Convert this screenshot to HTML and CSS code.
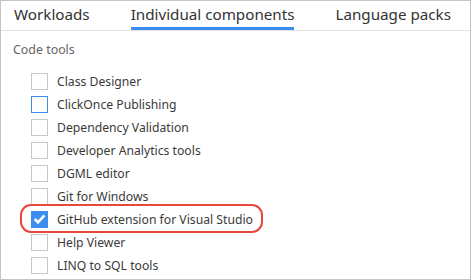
FILE: index.html
```html
<!DOCTYPE html>
<html>
<head>
<meta charset="utf-8">
<link rel="stylesheet" href="styles.css">
</head>
<body>
<div class="panel">
  <div class="tabs">
    <div class="tab">Workloads</div>
    <div class="tab active">Individual components</div>
    <div class="tab">Language packs</div>
  </div>
  <div class="content">
    <div class="section">Code tools</div>
    <ul class="list">
      <li class="row"><span class="box"></span><span class="label">Class Designer</span></li>
      <li class="row"><span class="box focus"></span><span class="label">ClickOnce Publishing</span></li>
      <li class="row"><span class="box"></span><span class="label">Dependency Validation</span></li>
      <li class="row"><span class="box"></span><span class="label">Developer Analytics tools</span></li>
      <li class="row"><span class="box"></span><span class="label">DGML editor</span></li>
      <li class="row"><span class="box"></span><span class="label">Git for Windows</span></li>
      <li class="row highlight"><span class="box checked"><svg viewBox="0 0 17 17" width="17" height="17"><path d="M3.6 8 L7 11.3 L13.4 4.4" fill="none" stroke="#fff" stroke-width="2.6" stroke-linecap="butt"/></svg></span><span class="label">GitHub extension for Visual Studio</span></li>
      <li class="row"><span class="box"></span><span class="label">Help Viewer</span></li>
      <li class="row"><span class="box"></span><span class="label">LINQ to SQL tools</span></li>
    </ul>
  </div>
</div>
</body>
</html>
```
FILE: styles.css
```css
html, body {
  margin: 0;
  padding: 0;
  background: #fff;
}
.panel {
  box-sizing: border-box;
  width: 471px;
  height: 280px;
  border: 1px solid #c4c4c4;
  font-family: "Noto Sans", "Open Sans", sans-serif;
  overflow: hidden;
}
.tabs {
  display: flex;
  gap: 41px;
  padding-left: 13px;
  height: 29px;
  border-bottom: 1px solid #e3e3e3;
}
.tab {
  box-sizing: border-box;
  height: 29px;
  padding-top: 2px;
  font-size: 15.2px;
  line-height: 22px;
  color: #333;
  white-space: nowrap;
}
.tab.active {
  border-bottom: 3px solid #3c8df0;
}
.content {
  padding: 11px 0 0 12px;
}
.section {
  font-size: 12.4px;
  line-height: 16px;
  color: #666;
  height: 28px;
}
.list {
  list-style: none;
  margin: 0;
  padding: 0 0 0 18px;
}
.row {
  display: flex;
  align-items: center;
  gap: 9px;
  height: 23px;
  position: relative;
}
.box {
  box-sizing: border-box;
  width: 17px;
  height: 17px;
  border: 1px solid #c8c8c8;
  background: #fff;
  flex: none;
  display: flex;
}
.box.focus {
  border-color: #3c8ee8;
}
.box.checked {
  border-color: #3c8df0;
  background: #3c8df0;
}
.box.checked svg {
  margin: -1px;
}
.label {
  font-size: 12.2px;
  color: #3a3a3a;
  white-space: nowrap;
}
.highlight::before {
  content: "";
  position: absolute;
  left: -11px;
  top: -4px;
  width: 243px;
  height: 29px;
  box-sizing: border-box;
  border: 2px solid #e8473e;
  border-radius: 11px;
}
```
